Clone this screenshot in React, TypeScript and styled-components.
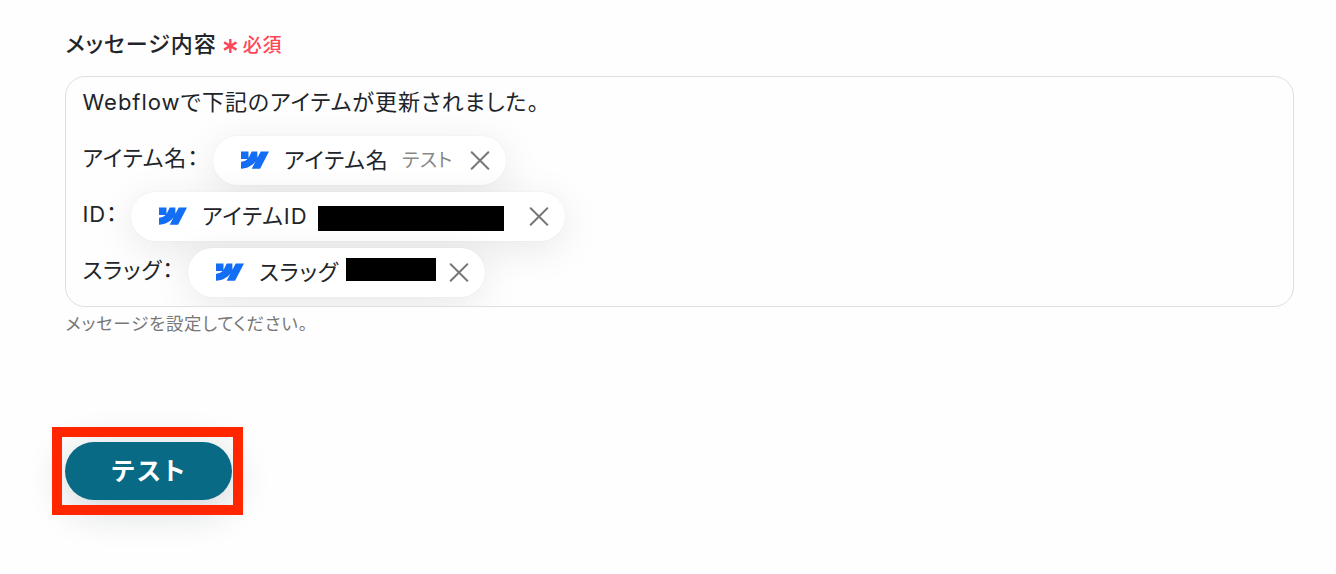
import styled, { createGlobalStyle } from 'styled-components'

const GlobalStyle = createGlobalStyle`
  *,
  *::before,
  *::after {
    box-sizing: border-box;
  }

  body {
    margin: 0;
    background: #fefefe;
    color: #212529;
    font-family: Inter, 'Noto Sans CJK JP', sans-serif;
    font-feature-settings: 'palt';
  }
`

const items = [
  {
    label: 'アイテム名：',
    labelWidth: 130.5,
    name: 'アイテム名',
    nameWidth: 118,
    value: 'テスト',
    width: 292.5,
  },
  {
    label: 'ID：',
    labelWidth: 48.5,
    name: 'アイテムID',
    nameWidth: 116,
    maskWidth: 186,
    maskHeight: 25,
    maskTop: 4,
    width: 433.5,
  },
  {
    label: 'スラッグ：',
    labelWidth: 105.5,
    name: 'スラッグ',
    nameWidth: 87,
    maskWidth: 90,
    maskHeight: 23,
    maskTop: -6,
    width: 296.5,
  },
]

const Page = styled.main`
  height: 574px;
  padding: 28px 42px 0 65px;
  overflow: hidden;
`

const Heading = styled.div`
  display: flex;
  align-items: center;
  height: 32px;
  padding-left: 0.5px;
  font-size: 22px;
  font-weight: 500;
  letter-spacing: 1px;
  line-height: 32px;
  white-space: nowrap;
`

const Required = styled.span`
  display: flex;
  align-items: center;
  gap: 6px;
  margin-left: 6px;
  padding-top: 3px;
  color: #ff4757;
  font-size: 19px;
  letter-spacing: 0.7px;
`

const Editor = styled.div`
  height: 231px;
  margin-top: 16px;
  padding: 9px 16px 0 16.5px;
  border: 1px solid #dddfe5;
  border-radius: 20px;
  font-size: 22px;
  letter-spacing: 0.9px;
  overflow: hidden;
`

const Line = styled.div`
  height: 50px;
  letter-spacing: 1px;
  line-height: 32px;
  white-space: nowrap;
`

const Row = styled.div`
  display: flex;
  height: 56px;
`

const Label = styled.div<{ $width: number }>`
  flex: none;
  width: ${(p) => p.$width}px;
  padding-top: 6px;
  line-height: 32px;
  white-space: nowrap;
`

const Chip = styled.div<{ $width: number }>`
  display: flex;
  align-items: center;
  width: ${(p) => p.$width}px;
  height: 49px;
  padding: 0 16px 0 28px;
  border-radius: 25px;
  background: #fff;
  box-shadow: 0 8px 40px rgba(0, 0, 0, 0.09), 0 0 2px rgba(0, 0, 0, 0.06);
`

const ChipName = styled.span<{ $width: number }>`
  flex: none;
  width: ${(p) => p.$width}px;
  margin-left: 15px;
  padding-bottom: 5px;
  white-space: nowrap;
`

const ChipValue = styled.span`
  padding-bottom: 4px;
  color: #888;
  font-size: 19px;
  letter-spacing: 0.6px;
  white-space: nowrap;
`

const Mask = styled.span<{ $width: number; $height: number; $top: number }>`
  flex: none;
  width: ${(p) => p.$width}px;
  height: ${(p) => p.$height}px;
  margin-top: ${(p) => p.$top}px;
  background: #000;
`

const CloseIcon = styled.svg`
  flex: none;
  margin-left: auto;
`

const Help = styled.div`
  height: 32px;
  margin-top: 1px;
  padding-left: 0.5px;
  color: #777;
  font-size: 17.4px;
  letter-spacing: 0.85px;
  line-height: 32px;
`

const ButtonArea = styled.div`
  position: relative;
  width: 167px;
  margin-top: 102px;

  &::after {
    content: '';
    position: absolute;
    top: -15px;
    left: -13px;
    width: 191px;
    height: 88px;
    border: 10px solid #ff2600;
    pointer-events: none;
  }
`

const TestButton = styled.button`
  display: block;
  width: 167px;
  height: 58px;
  padding: 0 0 4px 2px;
  border: 0;
  border-radius: 29px;
  background: #086a84;
  box-shadow: 0 8px 40px rgba(0, 30, 40, 0.2);
  color: #fff;
  font: inherit;
  font-size: 25px;
  font-weight: 700;
  font-feature-settings: 'palt';
  letter-spacing: 2.8px;
`

const WebflowLogo = () => (
  <svg width="28" height="18" viewBox="0 4.9 24 15.6" preserveAspectRatio="none" fill="#146ef5" overflow="visible">
    <path d="m24 4.515-7.658 14.97H9.149l3.205-6.204h-.144C9.566 16.713 5.621 18.973 0 19.485v-6.118s3.596-.213 5.71-2.435H0V4.515h6.417v5.278l.144-.001 2.622-5.277h4.854v5.244h.144l2.72-5.244H24Z" />
  </svg>
)

const Asterisk = () => (
  <svg width="14" height="16" viewBox="0 0 14 16" stroke="currentColor" strokeWidth="2.4">
    <path d="M7.3 1v14M1.1 4.4l12.4 7.2M13.5 4.4 1.1 11.6" />
  </svg>
)

export default function App() {
  return (
    <>
      <GlobalStyle />
      <Page>
        <Heading>
          メッセージ内容
          <Required>
            <Asterisk />
            必須
          </Required>
        </Heading>

        <Editor>
          <Line>Webflowで下記のアイテムが更新されました。</Line>
          {items.map((item) => (
            <Row key={item.name}>
              <Label $width={item.labelWidth}>{item.label}</Label>
              <Chip $width={item.width}>
                <WebflowLogo />
                <ChipName $width={item.nameWidth}>{item.name}</ChipName>
                {item.value ? (
                  <ChipValue>{item.value}</ChipValue>
                ) : (
                  <Mask
                    $width={item.maskWidth ?? 0}
                    $height={item.maskHeight ?? 0}
                    $top={item.maskTop ?? 0}
                  />
                )}
                <CloseIcon width="20" height="20" viewBox="0 0 20 20" stroke="#777" strokeWidth="2" strokeLinecap="round">
                  <path d="m1.7 1.2 16.6 16.6M18.3 1.2 1.7 17.8" />
                </CloseIcon>
              </Chip>
            </Row>
          ))}
        </Editor>
        <Help>メッセージを設定してください。</Help>

        <ButtonArea>
          <TestButton type="button">テスト</TestButton>
        </ButtonArea>
      </Page>
    </>
  )
}
